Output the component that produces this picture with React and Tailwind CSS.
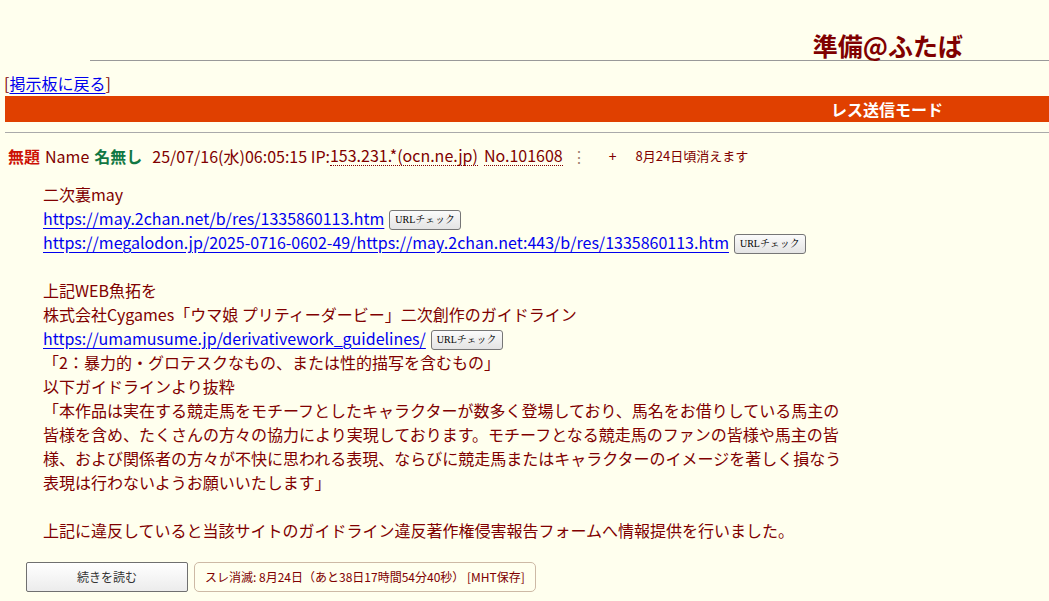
import React from "react";

const F = { fontFamily: '"Noto Sans CJK JP", "Noto Sans", sans-serif' };

function UrlCheck() {
  return (
    <span
      className="inline-flex items-center ml-[5px] h-[20px] px-[5px] border border-[#767676] rounded-[3px] bg-gradient-to-b from-[#fbfbfb] to-[#e4e4e4] text-[10px] text-black align-[2px] leading-none"
      style={{ fontFamily: '"Liberation Serif", "Noto Serif CJK JP", serif' }}
    >
      URLチェック
    </span>
  );
}

function L({ children }) {
  return <a className="text-[#0000ee] underline underline-offset-[3px]">{children}</a>;
}

export default function App() {
  return (
    <div className="min-h-[601px] w-[1049px] bg-[#ffffee] text-[#800000] overflow-hidden" style={F}>
      <div className="h-[30px]" />
      <div className="flex justify-end pr-[86px] h-[30px] items-center">
        <span className="text-[25px] font-bold leading-none text-[#800000]">準備@ふたば</span>
      </div>
      <div className="ml-[90px] h-0 border-t border-[#999]" />
      <div className="h-[11px]" />
      <div className="pl-[4px] text-[16px] leading-[22px]">
        [<L>掲示板に戻る</L>]
      </div>
      <div className="mt-[2px] ml-[5px] h-[26px] bg-[#e04000] flex items-center justify-end pr-[106px]">
        <span className="text-white font-bold text-[16px] leading-none">レス送信モード</span>
      </div>
      <div className="mt-[10px] ml-[5px] h-0 border-t border-[#aaa]" />

      <div className="mt-[12px] pl-[8px] flex items-center text-[16px] leading-[22px] whitespace-nowrap">
        <span className="font-bold text-[#cc1105]">無題</span>
        <span className="ml-[5px]">Name</span>
        <span className="ml-[5px] font-bold text-[#117743]">名無し</span>
        <span className="ml-[10px]">25/07/16(水)06:05:15 IP:</span>
        <span className="border-b border-dotted border-[#800000] leading-[19px]">153.231.*(ocn.ne.jp)</span>
        <span className="ml-[6px] border-b border-dotted border-[#800000] leading-[19px]">No.101608</span>
        <span className="ml-[8px] text-[#a08070]">⋮</span>
        <span className="ml-[22px] text-[14px]">+</span>
        <span className="ml-[19px] text-[13px]">8月24日頃消えます</span>
      </div>

      <div className="mt-[15px] pl-[43px] text-[16px] leading-[24px] whitespace-nowrap">
        <div>二次裏may</div>
        <div><L>https://may.2chan.net/b/res/1335860113.htm</L><UrlCheck /></div>
        <div><L>https://megalodon.jp/2025-0716-0602-49/https://may.2chan.net:443/b/res/1335860113.htm</L><UrlCheck /></div>
        <div className="h-[24px]" />
        <div>上記WEB魚拓を</div>
        <div>株式会社Cygames「ウマ娘 プリティーダービー」二次創作のガイドライン</div>
        <div><L>https://umamusume.jp/derivativework_guidelines/</L><UrlCheck /></div>
        <div>「2：暴力的・グロテスクなもの、または性的描写を含むもの」</div>
        <div>以下ガイドラインより抜粋</div>
        <div>「本作品は実在する競走馬をモチーフとしたキャラクターが数多く登場しており、馬名をお借りしている馬主の</div>
        <div>皆様を含め、たくさんの方々の協力により実現しております。モチーフとなる競走馬のファンの皆様や馬主の皆</div>
        <div>様、および関係者の方々が不快に思われる表現、ならびに競走馬またはキャラクターのイメージを著しく損なう</div>
        <div>表現は行わないようお願いいたします」</div>
        <div className="h-[24px]" />
        <div>上記に違反していると当該サイトのガイドライン違反著作権侵害報告フォームへ情報提供を行いました。</div>
      </div>

      <div className="mt-[20px] pl-[26px] flex gap-[6px]">
        <div className="w-[162px] h-[30px] flex items-center justify-center border border-[#707070] rounded-[2px] bg-gradient-to-b from-[#ffffff] to-[#ececec] text-[12px] text-[#333]">
          続きを読む
        </div>
        <div className="h-[30px] flex items-center px-[10px] border border-[#cdb9a5] rounded-[5px] text-[12px] text-[#800000]">
          スレ消滅: 8月24日（あと38日17時間54分40秒） [MHT保存]
        </div>
      </div>
    </div>
  );
}
